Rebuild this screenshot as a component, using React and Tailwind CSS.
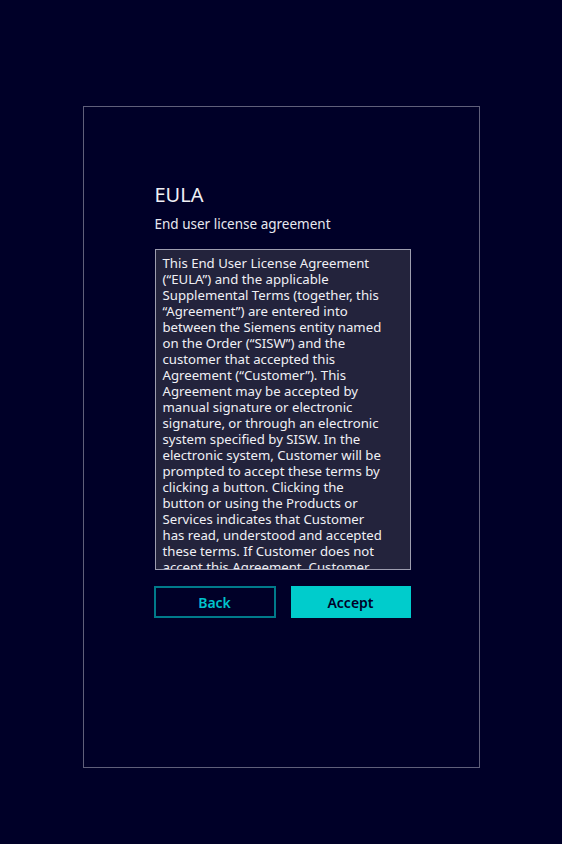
import React from 'react';

const eulaLines = [
  'This End User License Agreement',
  '(“EULA”) and the applicable',
  'Supplemental Terms (together, this',
  '“Agreement”) are entered into',
  'between the Siemens entity named',
  'on the Order (“SISW”) and the',
  'customer that accepted this',
  'Agreement (“Customer”). This',
  'Agreement may be accepted by',
  'manual signature or electronic',
  'signature, or through an electronic',
  'system specified by SISW. In the',
  'electronic system, Customer will be',
  'prompted to accept these terms by',
  'clicking a button. Clicking the',
  'button or using the Products or',
  'Services indicates that Customer',
  'has read, understood and accepted',
  'these terms. If Customer does not',
  'accept this Agreement, Customer',
  'shall not use the Products or',
  'Services.',
];

const App = () => {
  return (
    <div className="min-h-[844px] bg-[#000028] pt-[106px] font-['Noto_Sans',sans-serif]">
      <div className="mx-auto h-[662px] w-[397px] border border-[#5f5f7a] pt-[76px] pl-[71px]">
        {/* Header */}
        <h1 className="text-[20px] leading-[24px] text-[#f0f0f5]">EULA</h1>
        <p className="mt-[7px] text-[13.5px] leading-[20px] text-[#e8e8ef]">End user license agreement</p>

        {/* Agreement text */}
        <div className="mt-[15px] h-[321px] w-[256px] overflow-hidden border border-[#9d9daf] bg-[#23233c] px-[7px] pt-[5px] text-[13.2px] leading-[16px] text-[#f0f0f5]">
          {eulaLines.map((line, i) => (
            <div key={i} className="whitespace-nowrap">{line}</div>
          ))}
        </div>

        {/* Actions */}
        <div className="-ml-px mt-[16px] flex w-[257px] gap-[15px]">
          <button className="h-[32px] w-[122px] border-2 border-[#007a8a] text-[14px] font-semibold text-[#00c3cc]">
            Back
          </button>
          <button className="h-[32px] w-[120px] bg-[#00cccc] text-[14px] font-semibold text-[#000028]">
            Accept
          </button>
        </div>
      </div>
    </div>
  );
};

export default App;
